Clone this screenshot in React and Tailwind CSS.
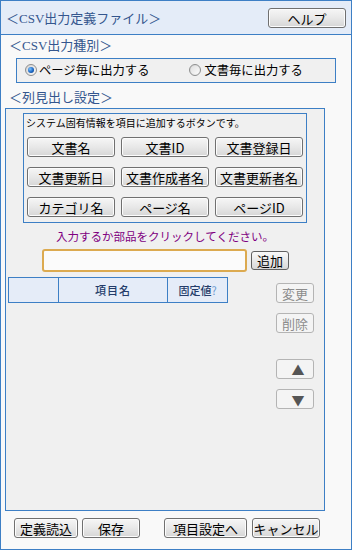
import React from "react";

const btn =
  "flex items-center justify-center border border-[#707070] rounded-[3px] bg-gradient-to-b from-[#f6f6f6] via-[#e8e8e8] to-[#d6d6d6] shadow-[inset_0_0_0_1px_#fcfcfc] text-[13px] leading-none text-black";
const dis =
  "flex items-center justify-center border border-[#b4b4b4] rounded-[3px] bg-[#f4f4f4] text-[13px] leading-none text-[#8c8c8c]";

function Radio({ on }) {
  return (
    <span className="w-[12px] h-[12px] rounded-full border border-[#8e8f8f] bg-gradient-to-br from-[#d4d4d4] to-[#f8f8f8] flex items-center justify-center shrink-0">
      {on ? (
        <span className="w-[6px] h-[6px] rounded-full bg-[radial-gradient(circle_at_35%_35%,#7cc4ff,#1a66c4_55%,#0b3a78)]" />
      ) : (
        <span className="w-[8px] h-[8px] rounded-full bg-gradient-to-br from-[#e0e0e0] to-[#fbfbfb]" />
      )}
    </span>
  );
}

export default function App() {
  const sys = [
    "文書名",
    "文書ID",
    "文書登録日",
    "文書更新日",
    "文書作成者名",
    "文書更新者名",
    "カテゴリ名",
    "ページ名",
    "ページID",
  ];
  return (
    <div className="w-[352px] h-[550px] border border-[#3d7fc5] bg-[#f9f9f9] flex flex-col font-['Noto_Sans_CJK_JP',sans-serif] text-[12px] text-black overflow-hidden">
      {/* header */}
      <div className="h-[34px] shrink-0 bg-[#e4ecf8] border-b border-[#3d7fc5] flex items-center justify-between pl-[5px] pr-[5px]">
        <div className="text-[13px] text-[#34568e] leading-none">
          ＜<span className="font-['Liberation_Serif',serif] text-[13px]">CSV</span>出力定義ファイル＞
        </div>
        <button className={btn + " w-[78px] h-[20px] mt-[1px]"}>ヘルプ</button>
      </div>

      <div className="h-[18px] mt-[1px] pl-[8px] leading-[18px] text-[13px] text-[#34568e]">
        ＜<span className="font-['Liberation_Serif',serif]">CSV</span>出力種別＞
      </div>

      <div className="ml-[15px] mt-[4px] w-[320px] h-[25px] border border-[#3d7fc5] bg-[#f0f0f0] flex items-center">
        <div className="flex items-center ml-[8px] gap-[2px]">
          <Radio on />
          <span className="text-[12.3px] leading-none">ページ毎に出力する</span>
        </div>
        <div className="flex items-center ml-[40px] gap-[3px]">
          <Radio />
          <span className="text-[12.3px] leading-none">文書毎に出力する</span>
        </div>
      </div>

      <div className="h-[18px] mt-[5px] pl-[8px] leading-[18px] text-[13px] text-[#34568e]">
        ＜列見出し設定＞
      </div>

      {/* main panel */}
      <div className="ml-[4px] mt-[2px] w-[320px] h-[403px] shrink-0 border border-[#3d7fc5] bg-[#f0f0f0] flex flex-col">
        <div className="ml-[17px] mt-[4px] w-[284px] h-[110px] border border-[#3d7fc5] flex flex-col">
          <div className="h-[18px] leading-[18px] pl-[2px] text-[10px] whitespace-nowrap">
            システム固有情報を項目に追加するボタンです。
          </div>
          <div className="ml-[3px] mt-[5px] grid grid-cols-[88px_88px_88px] gap-x-[6px] gap-y-[10px]">
            {sys.map((s) => (
              <button key={s} className={btn + " h-[20px] w-[88px] whitespace-nowrap"}>
                {s}
              </button>
            ))}
          </div>
        </div>

        <div className="mt-[5px] h-[16px] leading-[16px] text-center text-[11.5px] text-[#800080]">
          入力するか部品をクリックしてください。
        </div>

        <div className="mt-[5px] flex items-center">
          <div className="ml-[36px] w-[205px] h-[23px] border-2 border-[#dcaa50] rounded-[3px] bg-[#fbfbfb]" />
          <button className="ml-[4px] w-[38px] h-[19px] flex items-center justify-center border border-[#606060] rounded-[3px] bg-gradient-to-b from-[#fafafa] to-[#d8d8d8] text-[13px] leading-none">
            追加
          </button>
        </div>

        <div className="mt-[5px] flex">
          <div className="ml-[2px] w-[220px] h-[26px] border border-[#3d7fc5] bg-[#e5ecf8] flex text-[11px] text-[#243c6a] font-medium">
            <div className="w-[50px] border-r border-[#3d7fc5]" />
            <div className="w-[109px] border-r border-[#3d7fc5] flex items-center justify-center tracking-[1px]">
              項目名
            </div>
            <div className="flex-1 flex items-center justify-center">
              固定値<span className="text-[#6a9ad0] font-normal">?</span>
            </div>
          </div>
          <div className="ml-[48px] mt-[6px] flex flex-col">
            <button className={dis + " w-[38px] h-[20px]"}>変更</button>
            <button className={dis + " w-[38px] h-[20px] mt-[10px]"}>削除</button>
            <button className={dis + " w-[38px] h-[20px] mt-[26px] text-[#555] text-[10px] pl-[6px]"}>▲</button>
            <button className={dis + " w-[38px] h-[20px] mt-[10px] text-[#555] text-[10px] pl-[6px]"}>▼</button>
          </div>
        </div>
      </div>

      {/* footer buttons */}
      <div className="mt-[7px] flex items-center">
        <button className={btn + " ml-[13px] w-[64px] h-[20px]"}>定義読込</button>
        <button className={btn + " ml-[4px] w-[58px] h-[20px]"}>保存</button>
        <button className={btn + " ml-[24px] w-[83px] h-[20px]"}>項目設定へ</button>
        <button className={btn + " ml-[5px] w-[68px] h-[20px]"}>キャンセル</button>
      </div>
    </div>
  );
}
